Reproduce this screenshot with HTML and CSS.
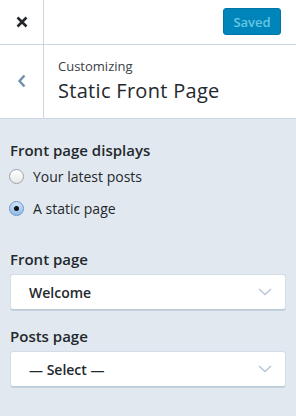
FILE: index.html
```html
<!DOCTYPE html>
<html>
<head>
<meta charset="utf-8">
<link rel="stylesheet" href="styles.css">
</head>
<body>
<div class="panel">
  <div class="topbar">
    <div class="close">
      <svg width="12" height="12" viewBox="0 0 12 12"><path d="M1.5 1.5 L10.5 10.5 M10.5 1.5 L1.5 10.5" stroke="#23282d" stroke-width="2.6" stroke-linecap="butt"/></svg>
    </div>
    <div class="topbar-space"></div>
    <button class="saved">Saved</button>
  </div>
  <div class="titlebar">
    <div class="back">
      <svg width="10" height="14" viewBox="0 0 10 14"><path d="M7.5 1.5 L2.5 7 L7.5 12.5" fill="none" stroke="#6f8eab" stroke-width="2.4"/></svg>
    </div>
    <div class="titles">
      <div class="crumb">Customizing</div>
      <div class="title">Static Front Page</div>
    </div>
  </div>
  <div class="content">
    <div class="group-title">Front page displays</div>
    <label class="radio-row"><span class="radio"></span><span>Your latest posts</span></label>
    <label class="radio-row"><span class="radio checked"></span><span>A static page</span></label>
    <div class="field-title first">Front page</div>
    <div class="select"><span>Welcome</span><svg width="14" height="8" viewBox="0 0 14 8"><path d="M1 1 L7 6.5 L13 1" fill="none" stroke="#b9c8d6" stroke-width="1.6"/></svg></div>
    <div class="field-title">Posts page</div>
    <div class="select"><span>— Select —</span><svg width="14" height="8" viewBox="0 0 14 8"><path d="M1 1 L7 6.5 L13 1" fill="none" stroke="#b9c8d6" stroke-width="1.6"/></svg></div>
  </div>
</div>
</body>
</html>
```
FILE: styles.css
```css
html, body {
  margin: 0;
  padding: 0;
}
body {
  width: 296px;
  height: 416px;
  background: #e2e8ef;
  font-family: "Open Sans", Lato, sans-serif;
  color: #23282d;
  overflow: hidden;
}
.panel {
  display: flex;
  flex-direction: column;
}
.topbar {
  display: flex;
  align-items: center;
  height: 44px;
  background: #fff;
  border-bottom: 1px solid #cbd8e3;
}
.close {
  width: 44px;
  height: 44px;
  border-right: 1px solid #cbd8e3;
  display: flex;
  align-items: center;
  justify-content: center;
  box-sizing: border-box;
}
.topbar-space {
  flex: 1;
}
.saved {
  margin-right: 15px;
  width: 58px;
  height: 27px;
  margin-top: -1px;
  background: #0085ba;
  border: 1px solid #0075a8;
  border-radius: 3px;
  color: #66c6e4;
  font-family: "Open Sans", Lato, sans-serif;
  font-size: 13px;
  font-weight: 600;
  padding: 0;
}
.titlebar {
  display: flex;
  height: 73px;
  background: #fff;
  border-bottom: 1px solid #cbd8e3;
}
.back {
  width: 44px;
  border-right: 1px solid #cbd8e3;
  box-sizing: border-box;
  display: flex;
  align-items: center;
  justify-content: center;
  padding-bottom: 2px;
}
.titles {
  padding: 12px 0 0 14px;
}
.crumb {
  font-size: 13px;
  line-height: 18px;
  color: #3a4046;
}
.title {
  font-size: 20px;
  line-height: 26px;
  margin-top: 3px;
  font-weight: 400;
  letter-spacing: 0.3px;
}
.content {
  padding: 21px 10px 0 9px;
  display: flex;
  flex-direction: column;
}
.group-title {
  font-size: 15px;
  font-weight: 600;
  line-height: 20px;
  margin-left: 1px;
}
.radio-row {
  display: flex;
  align-items: center;
  gap: 9px;
  font-size: 14px;
  height: 22px;
  margin-top: 5px;
}
.radio-row + .radio-row {
  margin-top: 10px;
}
.radio {
  width: 15px;
  height: 15px;
  box-sizing: border-box;
  border-radius: 50%;
  border: 1px solid #9aa2aa;
  background: linear-gradient(#ffffff, #e8e8e8);
  display: flex;
  align-items: center;
  justify-content: center;
}
.radio.checked {
  border-color: #6f93c4;
  background: linear-gradient(#cfe3fb, #8fbbee);
}
.radio.checked::after {
  content: "";
  width: 5px;
  height: 5px;
  border-radius: 50%;
  background: #111;
}
.field-title {
  font-size: 15px;
  font-weight: 600;
  line-height: 20px;
  margin: 16px 0 5px 1px;
}
.field-title.first {
  margin-top: 30px;
}
.select {
  height: 36px;
  box-sizing: border-box;
  margin-left: 1px;
  background: #fff;
  border: 1px solid #d3dde6;
  border-bottom-color: #bccbd8;
  border-radius: 3px;
  box-shadow: 0 1px 0 #c6d3df;
  display: flex;
  align-items: center;
  justify-content: space-between;
  padding: 0 13px 0 18px;
  font-size: 14px;
  font-weight: 600;
}
```
